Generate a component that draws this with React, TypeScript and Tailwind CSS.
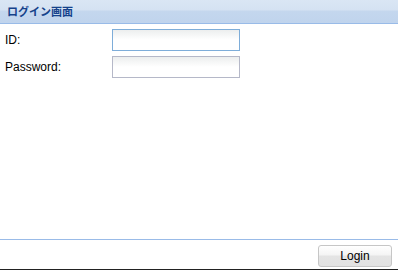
import React from "react";

export default function App() {
  const font = { fontFamily: '"Liberation Sans", Arial, "Noto Sans CJK JP", sans-serif' };
  return (
    <div className="w-[398px] h-[270px] bg-white flex flex-col overflow-hidden text-[12px] text-black" style={font}>
      <div className="h-[24px] shrink-0 border-b border-[#99bbe8] bg-[linear-gradient(to_bottom,#dae6f4_0px,#d5e2f2_10px,#c4d7ee_11px,#c0d4ed_23px)] flex items-center pl-[7px]">
        <span className="font-bold text-[#15428b] text-[11px]" style={{ fontFamily: '"Noto Sans CJK JP", sans-serif' }}>ログイン画面</span>
      </div>
      <div className="flex-1 flex flex-col pt-[5px] pl-[5px] gap-[5px]">
        <div className="flex items-center h-[22px]">
          <label className="w-[107px]">ID:</label>
          <input className="w-[128px] h-[22px] border border-[#7eadd9] bg-[linear-gradient(to_bottom,#eceeee_0px,#ffffff_10px)] outline-none px-1 text-[12px]" />
        </div>
        <div className="flex items-center h-[22px]">
          <label className="w-[107px]">Password:</label>
          <input type="password" className="w-[128px] h-[22px] border border-[#b5b8c8] bg-[linear-gradient(to_bottom,#eceeee_0px,#ffffff_10px)] outline-none px-1 text-[12px]" />
        </div>
      </div>
      <div className="h-[30px] shrink-0 border-t border-[#99bbe8] flex items-start justify-end pr-[6px] pt-[5px]">
        <button className="w-[74px] h-[22px] rounded-[3px] border border-[#c6c6c6] bg-[linear-gradient(to_bottom,#ffffff_0%,#f4f4f4_45%,#e4e4e4_50%,#e2e2e2_100%)] text-[12px] text-black leading-none">
          Login
        </button>
      </div>
      <div className="h-[1px] shrink-0 bg-[#222]" />
    </div>
  );
}
